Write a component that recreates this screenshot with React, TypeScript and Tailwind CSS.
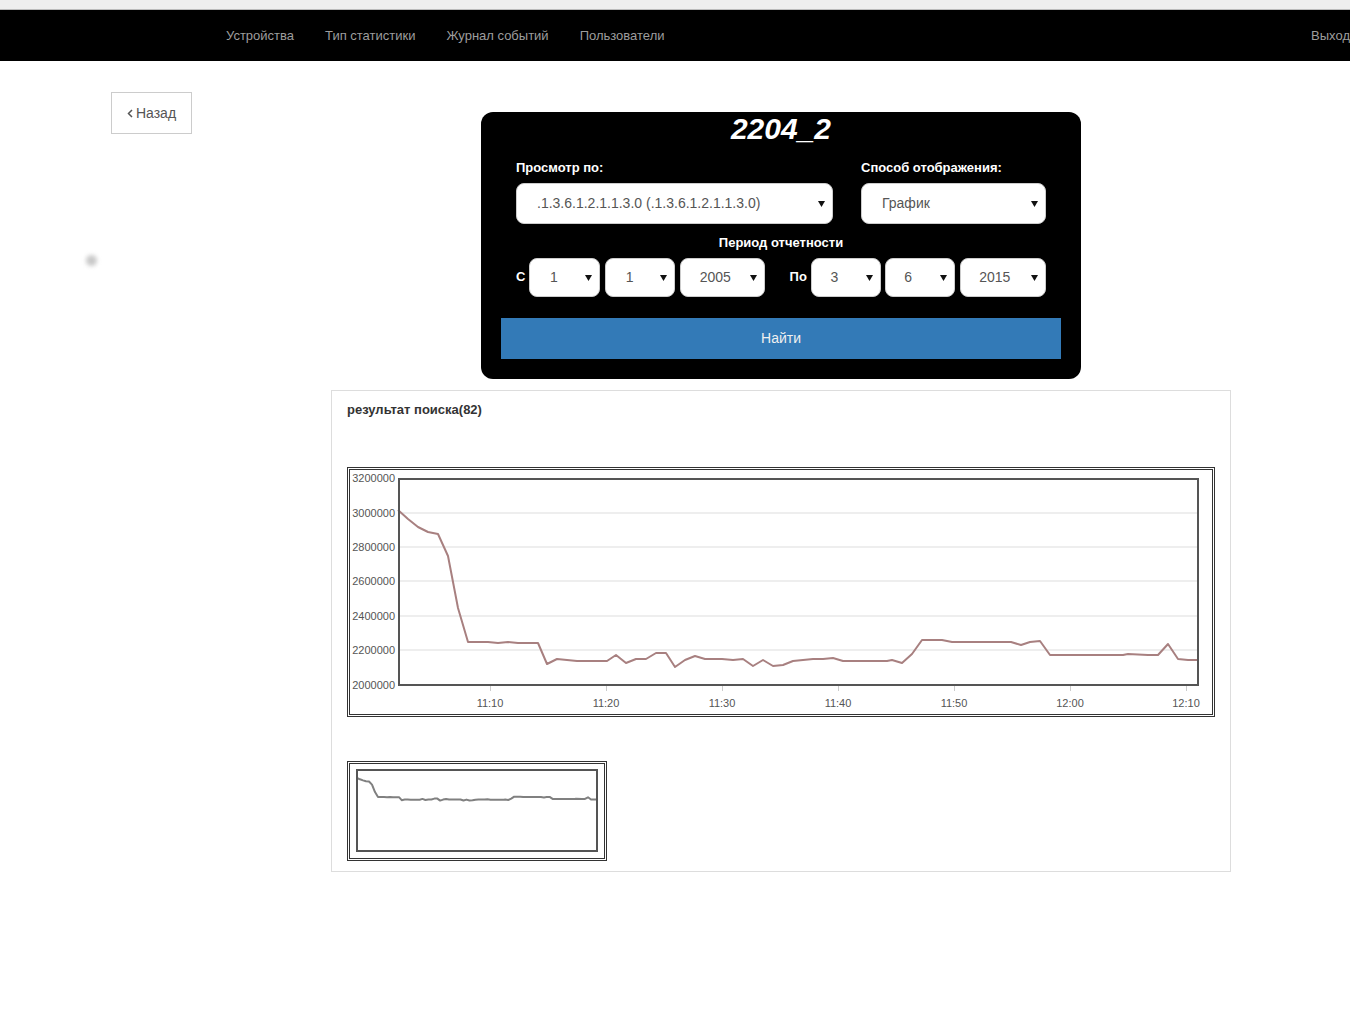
import React from 'react';

const FONT = { fontFamily: '"Liberation Sans", Arial, sans-serif' };

const navItems = ['Устройства', 'Тип статистики', 'Журнал событий', 'Пользователи'];

// chart points, page pixel coordinates of the main plot
const points: [number, number][] = [
  [398, 510], [408, 519], [418, 527], [428, 532], [438, 534], [448, 556], [458, 608], [468, 642],
  [488, 642], [498, 643], [508, 642], [518, 643], [538, 643], [547, 664], [557, 659], [567, 660],
  [577, 661], [597, 661], [607, 661], [616, 655], [626, 663], [636, 659], [646, 659], [656, 653],
  [666, 653], [675, 667], [685, 660], [695, 656], [705, 659], [722, 659], [733, 660], [743, 659],
  [753, 666], [763, 660], [773, 666], [783, 665], [793, 661], [803, 660], [813, 659], [823, 659],
  [833, 658], [843, 661], [887, 661], [892, 660], [902, 663], [912, 654], [922, 640], [933, 640],
  [942, 640], [952, 642], [1011, 642], [1021, 645], [1030, 642], [1040, 641], [1050, 655], [1067, 655],
  [1123, 655], [1128, 654], [1148, 655], [1158, 655], [1168, 644], [1178, 659], [1188, 660], [1198, 660],
];

const yLabels = [
  { v: '3200000', y: 478 },
  { v: '3000000', y: 513 },
  { v: '2800000', y: 547 },
  { v: '2600000', y: 581 },
  { v: '2400000', y: 616 },
  { v: '2200000', y: 650 },
  { v: '2000000', y: 685 },
];

const xLabels = ['11:10', '11:20', '11:30', '11:40', '11:50', '12:00', '12:10'];

function Arrow() {
  return (
    <svg width="7" height="7" viewBox="0 0 7 7" className="shrink-0">
      <polygon points="0,1 7,1 3.5,7" fill="#111" />
    </svg>
  );
}

function Select({ value, className, pl = 'pl-[20px]' }: { value: string; className: string; pl?: string }) {
  return (
    <div
      className={`flex items-center justify-between bg-white border border-[#ccc] rounded-[8px] pr-[7px] text-[14px] text-[#555] ${pl} ${className}`}
    >
      <span>{value}</span>
      <Arrow />
    </div>
  );
}

function MainChart() {
  const line = points.map((p) => p.join(',')).join(' ');
  return (
    <div className="w-[868px] h-[250px] border-[3px] border-double border-[#333]">
      <svg width="862" height="244" viewBox="350 470 862 244" style={FONT}>
        {yLabels.slice(1, 6).map((l) => (
          <line key={l.v} x1={399} x2={1197} y1={l.y} y2={l.y} stroke="#ddd" strokeWidth="1" />
        ))}
        {xLabels.map((l, i) => (
          <line key={l} x1={490.5 + i * 116} x2={490.5 + i * 116} y1={686} y2={691} stroke="#ccc" strokeWidth="1" />
        ))}
        <polyline points={line} fill="none" stroke="#a88080" strokeWidth="2" strokeLinejoin="round" />
        <rect x={399} y={479} width={799} height={206} fill="none" stroke="#555" strokeWidth="2" />
        {yLabels.map((l) => (
          <text key={l.v} x={395} y={l.y + 4} fontSize="11" fill="#555" textAnchor="end">
            {l.v}
          </text>
        ))}
        {xLabels.map((l, i) => (
          <text key={l} x={490 + i * 116} y={707} fontSize="11" fill="#555" textAnchor="middle">
            {l}
          </text>
        ))}
      </svg>
    </div>
  );
}

function MiniChart() {
  const line = points
    .map(([x, y]) => `${(357 + (x - 398) * 0.3).toFixed(1)},${(778 + (y - 510) * 0.144).toFixed(1)}`)
    .join(' ');
  return (
    <div className="w-[260px] h-[100px] border-[3px] border-double border-[#333]">
      <svg width="254" height="94" viewBox="350 764 254 94">
        <polyline points={line} fill="none" stroke="#808080" strokeWidth="2" strokeLinejoin="round" />
        <rect x={357} y={770} width={240} height={81} fill="none" stroke="#555" strokeWidth="2" />
      </svg>
    </div>
  );
}

export default function App() {
  return (
    <div className="min-h-[1024px] bg-white overflow-hidden" style={FONT}>
      {/* top strip */}
      <div className="h-[10px] bg-[#eeeeee] border-b border-[#bbb]" />
      {/* navbar */}
      <div className="h-[51px] bg-black flex items-center">
        <div className="flex ml-[210.5px] text-[13px] text-[#9d9d9d]">
          {navItems.map((n) => (
            <span key={n} className="px-[15.5px]">
              {n}
            </span>
          ))}
        </div>
        <span className="ml-auto text-[13px] text-[#9d9d9d] whitespace-nowrap">Выход</span>
      </div>

      <div className="flex">
        {/* left column */}
        <div className="w-[331px] shrink-0 flex flex-col">
          <div className="ml-[111px] mt-[31px] w-[81px] h-[42px] border border-[#ccc] flex items-center justify-center gap-[3px] text-[14px] text-[#555]">
            <svg width="6" height="9" viewBox="0 0 6 9">
              <polyline points="5,1 1.5,4.5 5,8" fill="none" stroke="#555" strokeWidth="1.5" />
            </svg>
            <span>Назад</span>
          </div>
          <div className="ml-[86px] mt-[121px] w-[11px] h-[11px] rounded-full bg-[#c8c8c8] blur-[2px]" />
        </div>

        {/* content column */}
        <div className="w-[900px] shrink-0 flex flex-col">
          <div className="mx-auto mt-[51px] w-[600px] h-[267px] bg-black rounded-[12px] text-white flex flex-col">
            <div className="h-[34px] flex items-center justify-center text-[30px] font-bold italic leading-none">
              2204_2
            </div>
            <div className="flex px-[35px] gap-[28px] mt-[12px]">
              <div className="w-[317px] flex flex-col">
                <div className="text-[13px] font-bold h-[20px] leading-[20px]">Просмотр по:</div>
                <Select value=".1.3.6.1.2.1.1.3.0 (.1.3.6.1.2.1.1.3.0)" className="mt-[5px] h-[41px]" />
              </div>
              <div className="w-[185px] flex flex-col">
                <div className="text-[13px] font-bold h-[20px] leading-[20px]">Способ отображения:</div>
                <Select value="График" className="mt-[5px] h-[41px]" />
              </div>
            </div>
            <div className="text-center text-[13px] font-bold mt-[9px] h-[20px] leading-[20px]">Период отчетности</div>
            <div className="flex px-[35px] mt-[5px] h-[39px]">
              <span className="text-[13px] font-bold w-[13px] mt-[9px]">С</span>
              <Select value="1" className="w-[71px] h-[39px]" />
              <Select value="1" className="ml-[5px] w-[70px] h-[39px]" />
              <Select value="2005" className="ml-[5px] w-[85px] h-[39px]" pl="pl-[19px]" />
              <span className="text-[13px] font-bold ml-[25px] w-[22px] mt-[9px]">По</span>
              <Select value="3" className="w-[70px] h-[39px]" pl="pl-[18px]" />
              <Select value="6" className="ml-[4px] w-[70px] h-[39px]" pl="pl-[18px]" />
              <Select value="2015" className="ml-[5px] w-[86px] h-[39px]" pl="pl-[18px]" />
            </div>
            <div className="mx-[20px] mt-[21px] h-[41px] bg-[#337ab7] flex items-center justify-center text-[14px] text-[#f0f0f0]">
              Найти
            </div>
          </div>

          <div className="mt-[11px] w-[900px] h-[482px] border border-[#ddd] px-[15px] pt-[10px]">
            <div className="text-[13px] font-bold text-[#333] h-[18px] leading-[18px]">результат поиска(82)</div>
            <div className="mt-[48px]">
              <MainChart />
            </div>
            <div className="mt-[44px]">
              <MiniChart />
            </div>
          </div>
        </div>
      </div>
    </div>
  );
}
